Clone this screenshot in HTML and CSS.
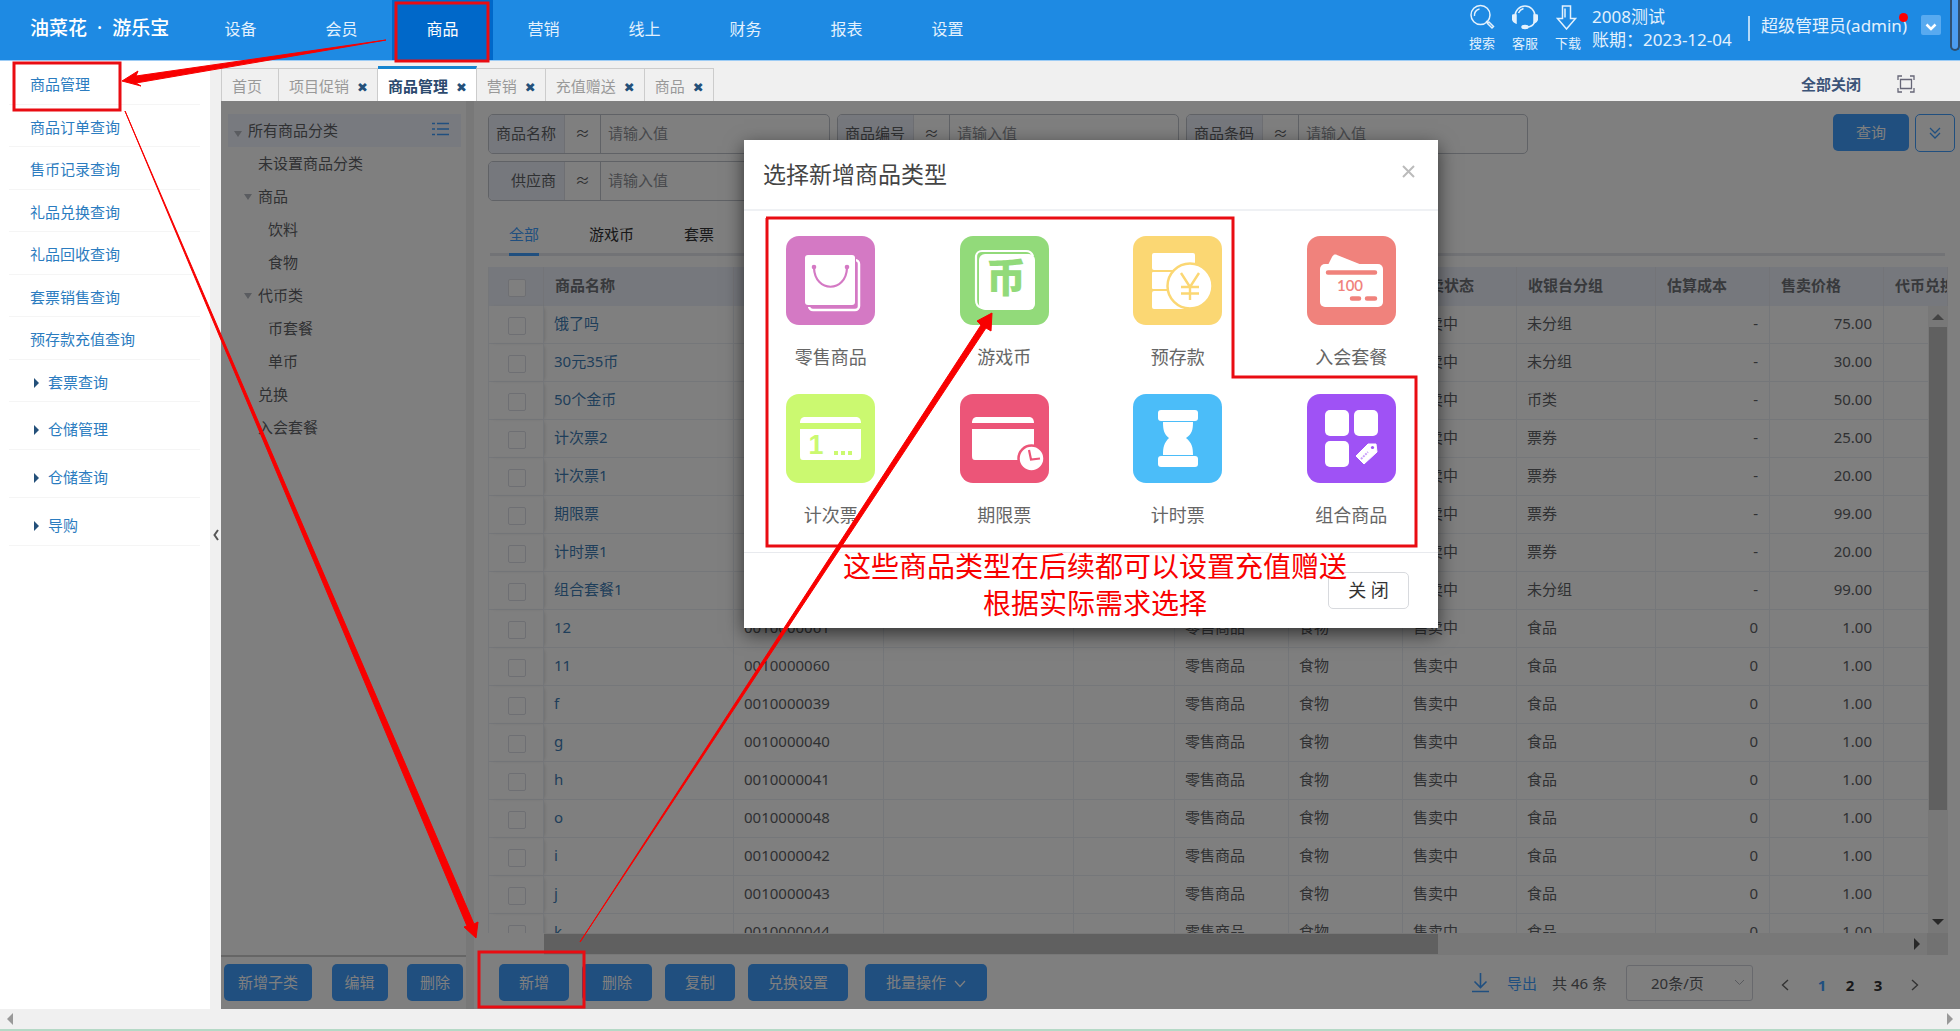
FILE: index.html
```html
<!DOCTYPE html>
<html lang="zh-CN">
<head>
<meta charset="utf-8">
<title>商品管理</title>
<link rel="stylesheet" href="styles.css">
</head>
<body>
<header class="topbar">
  <div class="logo"><span>油菜花</span><span>·</span><span>游乐宝</span></div>
  <nav class="mainnav">
    <a href="#">设备</a><a href="#">会员</a><a href="#" class="active">商品</a><a href="#">营销</a><a href="#">线上</a><a href="#">财务</a><a href="#">报表</a><a href="#">设置</a>
  </nav>
  <div class="tools">
    <a href="#"><svg width="26" height="26" viewBox="0 0 26 26"><circle cx="11.500" cy="11" r="9.500"/><path d="M5.500 12a6 6 0 0 1 5-7M17 17l2 1.500M18.500 19.500l4.500 4.500 1.500-1.500-4.500-4.500z"/></svg>搜索</a>
    <a href="#"><svg width="26" height="26" viewBox="0 0 26 26"><path d="M3 12a10 10 0 0 1 20 0M6.500 9a8 8 0 0 1 5-4.500M22.500 18c-1 3-4 5-8 5"/><path class="solid" d="M1 11h3v8c-4-1-4-6-3-8zM25 11h-3v8c4-1 4-6 3-8z"/><ellipse class="solid" cx="13" cy="23" rx="3" ry="1.500"/></svg>客服</a>
    <a href="#"><svg width="26" height="26" viewBox="0 0 26 26"><path d="M7.500 2h8v12.500h5L11.500 25l-9-10.500h5zM10 4.500v9"/></svg>下载</a>
  </div>
  <div class="account"><span>2008测试</span><span>账期：2023-12-04</span></div>
  <div class="user"><span>超级管理员(admin)</span><i class="dot"></i></div>
  <button class="drop" aria-label="展开"><svg width="12" height="8" viewBox="0 0 12 8"><path d="M1.500 1.500L6 6l4.500-4.500" fill="none" stroke="#fff" stroke-width="2.500"/></svg></button>
  <div class="edge"></div>
</header>

<div class="body">
  <aside class="side">
    <a href="#">商品管理</a><a href="#">商品订单查询</a><a href="#">售币记录查询</a><a href="#">礼品兑换查询</a><a href="#">礼品回收查询</a><a href="#">套票销售查询</a><a href="#">预存款充值查询</a><a href="#" class="sub">套票查询</a><a href="#" class="sub tall">仓储管理</a><a href="#" class="sub tall">仓储查询</a><a href="#" class="sub tall">导购</a>
  </aside>
  <button class="collapse" aria-label="收起"><svg width="6" height="12" viewBox="0 0 6 12"><path d="M5 1L1.500 6 5 11" fill="none" stroke="#555" stroke-width="2"/></svg></button>

  <div class="main">
    <div class="tabs">
      <a href="#" class="home">首页</a><a href="#">项目促销<b>✖</b></a><a href="#" class="on">商品管理<b>✖</b></a><a href="#">营销<b>✖</b></a><a href="#">充值赠送<b>✖</b></a><a href="#">商品<b>✖</b></a>
      <a href="#" class="closeall">全部关闭</a>
      <svg class="full" width="18" height="18" viewBox="0 0 18 18"><path d="M1 5V1h4M13 1h4v4M17 13v4h-4M5 17H1v-4M3.500 4.500h11v9h-11z" fill="none" stroke="#667" stroke-width="1.300"/></svg>
    </div>

    <div class="frame">
      <section class="tree">
        <ul>
          <li class="root"><i class="tri"></i>所有商品分类<svg width="17" height="14" viewBox="0 0 17 14"><path d="M0 1.500h3M5 1.500h12M0 7h3M5 7h12M0 12.500h3M5 12.500h12" stroke="#409eff" stroke-width="1.600"/></svg></li>
          <li class="l1">未设置商品分类</li>
          <li class="l1"><i class="tri"></i>商品</li>
          <li class="l2">饮料</li>
          <li class="l2">食物</li>
          <li class="l1"><i class="tri"></i>代币类</li>
          <li class="l2">币套餐</li>
          <li class="l2">单币</li>
          <li class="l1">兑换</li>
          <li class="l1">入会套餐</li>
        </ul>
        <div class="treefoot"><button class="btn">新增子类</button><button class="btn">编辑</button><button class="btn">删除</button></div>
      </section>
      <div class="split"></div>

      <section class="panel">
        <div class="search">
          <div class="fields">
            <div class="field"><label for="f1">商品名称</label><span>≈</span><input id="f1" placeholder="请输入值"></div>
            <div class="field"><label for="f2">商品编号</label><span>≈</span><input id="f2" placeholder="请输入值"></div>
            <div class="field"><label for="f3">商品条码</label><span>≈</span><input id="f3" placeholder="请输入值"></div>
            <div class="field"><label for="f4">供应商</label><span>≈</span><input id="f4" placeholder="请输入值"></div>
          </div>
          <button class="btn query">查询</button>
          <button class="more" aria-label="更多条件"><svg width="12" height="12" viewBox="0 0 12 12"><path d="M1 1l5 5 5-5M1 6l5 5 5-5" fill="none" stroke="#409eff" stroke-width="1.300"/></svg></button>
        </div>
        <div class="types"><a href="#" class="on">全部</a><a href="#">游戏币</a><a href="#">套票</a></div>

        <div class="grid">
          <div class="gridbody">
            <table>
              <colgroup><col class="c0"><col class="c1"><col class="c2"><col class="c3"><col class="c4"><col class="c5"><col class="c6"><col class="c6"><col class="c8"><col class="c9"><col class="c9"><col></colgroup>
              <thead><tr><th><input type="checkbox" aria-label="全选"></th><th>商品名称</th><th></th><th></th><th></th><th></th><th></th><th>售卖状态</th><th>收银台分组</th><th>估算成本</th><th>售卖价格</th><th>代币兑换</th></tr></thead>
              <tbody>
                <tr><td><input type="checkbox" aria-label="选择"></td><td><a href="#">饿了吗</a></td><td></td><td></td><td></td><td></td><td></td><td>售卖中</td><td>未分组</td><td>-</td><td>75.00</td><td></td></tr>
                <tr><td><input type="checkbox" aria-label="选择"></td><td><a href="#">30元35币</a></td><td></td><td></td><td></td><td></td><td></td><td>售卖中</td><td>未分组</td><td>-</td><td>30.00</td><td></td></tr>
                <tr><td><input type="checkbox" aria-label="选择"></td><td><a href="#">50个金币</a></td><td></td><td></td><td></td><td></td><td></td><td>售卖中</td><td>币类</td><td>-</td><td>50.00</td><td></td></tr>
                <tr><td><input type="checkbox" aria-label="选择"></td><td><a href="#">计次票2</a></td><td></td><td></td><td></td><td></td><td></td><td>售卖中</td><td>票券</td><td>-</td><td>25.00</td><td></td></tr>
                <tr><td><input type="checkbox" aria-label="选择"></td><td><a href="#">计次票1</a></td><td></td><td></td><td></td><td></td><td></td><td>售卖中</td><td>票券</td><td>-</td><td>20.00</td><td></td></tr>
                <tr><td><input type="checkbox" aria-label="选择"></td><td><a href="#">期限票</a></td><td></td><td></td><td></td><td></td><td></td><td>售卖中</td><td>票券</td><td>-</td><td>99.00</td><td></td></tr>
                <tr><td><input type="checkbox" aria-label="选择"></td><td><a href="#">计时票1</a></td><td></td><td></td><td></td><td></td><td></td><td>售卖中</td><td>票券</td><td>-</td><td>20.00</td><td></td></tr>
                <tr><td><input type="checkbox" aria-label="选择"></td><td><a href="#">组合套餐1</a></td><td></td><td></td><td></td><td></td><td></td><td>售卖中</td><td>未分组</td><td>-</td><td>99.00</td><td></td></tr>
                <tr><td><input type="checkbox" aria-label="选择"></td><td><a href="#">12</a></td><td>0010000061</td><td></td><td></td><td>零售商品</td><td>食物</td><td>售卖中</td><td>食品</td><td>0</td><td>1.00</td><td></td></tr>
                <tr><td><input type="checkbox" aria-label="选择"></td><td><a href="#">11</a></td><td>0010000060</td><td></td><td></td><td>零售商品</td><td>食物</td><td>售卖中</td><td>食品</td><td>0</td><td>1.00</td><td></td></tr>
                <tr><td><input type="checkbox" aria-label="选择"></td><td><a href="#">f</a></td><td>0010000039</td><td></td><td></td><td>零售商品</td><td>食物</td><td>售卖中</td><td>食品</td><td>0</td><td>1.00</td><td></td></tr>
                <tr><td><input type="checkbox" aria-label="选择"></td><td><a href="#">g</a></td><td>0010000040</td><td></td><td></td><td>零售商品</td><td>食物</td><td>售卖中</td><td>食品</td><td>0</td><td>1.00</td><td></td></tr>
                <tr><td><input type="checkbox" aria-label="选择"></td><td><a href="#">h</a></td><td>0010000041</td><td></td><td></td><td>零售商品</td><td>食物</td><td>售卖中</td><td>食品</td><td>0</td><td>1.00</td><td></td></tr>
                <tr><td><input type="checkbox" aria-label="选择"></td><td><a href="#">o</a></td><td>0010000048</td><td></td><td></td><td>零售商品</td><td>食物</td><td>售卖中</td><td>食品</td><td>0</td><td>1.00</td><td></td></tr>
                <tr><td><input type="checkbox" aria-label="选择"></td><td><a href="#">i</a></td><td>0010000042</td><td></td><td></td><td>零售商品</td><td>食物</td><td>售卖中</td><td>食品</td><td>0</td><td>1.00</td><td></td></tr>
                <tr><td><input type="checkbox" aria-label="选择"></td><td><a href="#">j</a></td><td>0010000043</td><td></td><td></td><td>零售商品</td><td>食物</td><td>售卖中</td><td>食品</td><td>0</td><td>1.00</td><td></td></tr>
                <tr><td><input type="checkbox" aria-label="选择"></td><td><a href="#">k</a></td><td>0010000044</td><td></td><td></td><td>零售商品</td><td>食物</td><td>售卖中</td><td>食品</td><td>0</td><td>1.00</td><td></td></tr>
              </tbody>
            </table>
            <div class="vbar"><i class="up"></i><div></div><i class="down"></i></div>
          </div>
          <div class="hbar"><div class="htrack"><div class="hthumb"></div><i class="right"></i></div><div class="corner"></div></div>
        </div>

        <div class="foot">
          <button class="btn w70">新增</button><button class="btn w70">删除</button><button class="btn w70">复制</button><button class="btn w100">兑换设置</button><button class="btn batch">批量操作<svg width="12" height="8" viewBox="0 0 12 8"><path d="M1 1l5 5.500L11 1" fill="none" stroke="#fff" stroke-width="1.200"/></svg></button>
          <div class="pager">
            <a href="#" class="export"><svg width="17" height="20" viewBox="0 0 17 20"><path d="M8.500 0v14M2.500 8.500l6 6 6-6M0 18.500h17" fill="none" stroke="#409eff" stroke-width="1.600"/></svg>导出</a>
            <span>共 46 条</span>
            <select aria-label="每页条数"><option>20条/页</option></select>
            <button class="pg" aria-label="上一页"><svg width="8" height="12" viewBox="0 0 8 12"><path d="M7 1L1.500 6 7 11" fill="none" stroke="#666" stroke-width="1.400"/></svg></button>
            <button class="num cur">1</button><button class="num">2</button><button class="num">3</button>
            <button class="pg" aria-label="下一页"><svg width="8" height="12" viewBox="0 0 8 12"><path d="M1 1l5.500 5L1 11" fill="none" stroke="#666" stroke-width="1.400"/></svg></button>
          </div>
        </div>
      </section>

      <div class="mask">
        <div class="modal" role="dialog" aria-labelledby="mt">
          <div class="mhead"><h2 id="mt">选择新增商品类型</h2><button aria-label="关闭"><svg width="13" height="13" viewBox="0 0 13 13"><path d="M1 1l11 11M12 1L1 12" stroke="#bbb" stroke-width="2"/></svg></button></div>
          <div class="kinds">
            <a href="#"><svg viewBox="0 0 89 89"><rect width="89" height="89" rx="13" fill="#d479c4"/><rect x="23" y="24" width="50" height="50" rx="4" fill="none" stroke="#fff" stroke-width="2.500"/><rect x="18" y="18" width="52" height="53" rx="4" fill="#d479c4"/><rect x="19" y="19" width="50" height="50" rx="3" fill="#fff"/><path d="M28 32c1 25 32 25 33 0" fill="none" stroke="#d479c4" stroke-width="2.200"/><circle cx="28" cy="31" r="2.300" fill="#d479c4"/><circle cx="61" cy="31" r="2.300" fill="#d479c4"/></svg>零售商品</a>
            <a href="#"><svg viewBox="0 0 89 89"><rect width="89" height="89" rx="13" fill="#92da7a"/><path d="M22 72c-4-1-6-4-6-8V21c0-4 3-6 6-6h44c4 0 6 2 7 5" fill="none" stroke="#fff" stroke-width="2.200"/><rect x="19" y="18" width="56" height="56" rx="6" fill="#fff"/><text x="46" y="56" text-anchor="middle" font-size="40" font-weight="900" fill="#92da7a">币</text></svg>游戏币</a>
            <a href="#"><svg viewBox="0 0 89 89"><rect width="89" height="89" rx="13" fill="#fbd773"/><rect x="19" y="17" width="43" height="17" rx="2" fill="#fff"/><rect x="19" y="36" width="38" height="17" rx="1" fill="#fff"/><rect x="19" y="55" width="40" height="18" rx="2" fill="#fff"/><circle cx="57" cy="50" r="22.500" fill="#fff" stroke="#fbd773" stroke-width="2.500"/><path d="M48 37l9 14 9-14M57 51v13M48 51h18M48 57.500h18" fill="none" stroke="#fbd773" stroke-width="2.400"/></svg>预存款</a>
            <a href="#"><svg viewBox="0 0 89 89"><rect width="89" height="89" rx="13" fill="#f0827c"/><path d="M21 29l4-8c1-2 3-3 5-2l25 10z" fill="#fff"/><rect x="13" y="28" width="63" height="43" rx="5" fill="#fff"/><path d="M21 36.500h47M45 62.500h7M60 62.500h8" stroke="#f0827c" stroke-width="4.500" stroke-linecap="round"/><text class="hundred" x="43" y="55" text-anchor="middle" font-size="15" font-weight="600" fill="#f0827c">100</text></svg>入会套餐</a>
            <a href="#"><svg viewBox="0 0 89 89"><rect width="89" height="89" rx="13" fill="#cbf970"/><path d="M14 29c0-4 2-6 5-6h51c3 0 5 2 5 6zM14 35h61v27c0 3-1 4-3 4H17c-2 0-3-1-3-4z" fill="#fff"/><text class="one" x="30" y="60" text-anchor="middle" font-size="27" font-weight="700" fill="#cbf970">1</text><path d="M48 57h4v4h-4zM55 57h4v4h-4zM62 57h4v4h-4z" fill="#cbf970"/></svg>计次票</a>
            <a href="#"><svg viewBox="0 0 89 89"><rect width="89" height="89" rx="13" fill="#ec5578"/><path d="M12 29c0-4 2-6 5-6h52c3 0 5 2 5 6zM12 35h62v27c0 3-1 4-3 4H15c-2 0-3-1-3-4z" fill="#fff"/><circle cx="71.500" cy="64.500" r="13" fill="#fff" stroke="#ec5578" stroke-width="2.500"/><path d="M69 56l2 9.500 9-1" fill="none" stroke="#ec5578" stroke-width="2.200"/></svg>期限票</a>
            <a href="#"><svg viewBox="0 0 89 89"><rect width="89" height="89" rx="13" fill="#4bbdf9"/><rect x="25" y="16" width="40" height="11" rx="3" fill="#fff"/><rect x="25" y="62" width="40" height="11" rx="3" fill="#fff"/><path d="M30 28h30c0 8-1 12-7 16 6 5 7 9 7 17H30c0-8 1-12 6-17-5-4-6-8-6-16z" fill="#fff"/></svg>计时票</a>
            <a href="#"><svg viewBox="0 0 89 89"><rect width="89" height="89" rx="13" fill="#9f52f5"/><rect x="18" y="16" width="24" height="26" rx="5" fill="#fff"/><rect x="47" y="16" width="24" height="26" rx="5" fill="#fff"/><rect x="18" y="47" width="24" height="26" rx="5" fill="#fff"/><path d="M49 62l12-12 8 0 1 8-13 12z" fill="#fff" stroke="#fff" stroke-linejoin="round"/><circle cx="65.500" cy="53.500" r="1.600" fill="#9f52f5"/><path d="M54 65l7-7" stroke="#c9a0fa" stroke-width="2" stroke-dasharray="2 1"/></svg>组合商品</a>
          </div>
          <div class="mfoot"><button>关 闭</button></div>
        </div>
      </div>
    </div>
  </div>
</div>
<div class="pagebar"><i class="left"></i><i class="right"></i></div>

<svg class="notes" width="1960" height="1031" viewBox="0 0 1960 1031">
  <g class="box"><rect x="396" y="3" width="92" height="58"/><rect x="14" y="63" width="106" height="47"/><rect x="479" y="952" width="105" height="55"/><path d="M766 218H1233V377H1416V546H767V218z"/></g>
  <g class="arrow"><path d="M386 40L136 83 141 86 122 81 138 71 136 76z"/><path d="M125 111L474 924 478 922 476 938 464 927 467 926z"/><path d="M580 942L986 328 991 331 992 313 977 321 981 325z"/></g>
  <text x="1095" y="577">这些商品类型在后续都可以设置充值赠送</text>
  <text x="1095" y="614">根据实际需求选择</text>
</svg>
</body>
</html>
```
FILE: styles.css
```css
* { box-sizing: border-box; }
html, body { height: 100%; margin: 0; }
body {
  display: flex; flex-direction: column; overflow: hidden; position: relative;
  font: 15px/20px "Noto Sans", "Noto Sans CJK SC", sans-serif; color: #606266; background: #f0f0f0;
}
a { color: inherit; text-decoration: none; }
button, input, select { font: inherit; color: inherit; margin: 0; padding: 0; border: 0; background: none; }
ul { list-style: none; margin: 0; padding: 0; }

/* top bar */
.topbar { flex: none; height: 61px; display: flex; background: #1e8ae3; border-bottom: 1px solid #9dccf5; color: #e3f1fd; position: relative; }
.logo { width: 190px; padding: 18px 0 0 30px; font-size: 19px; font-weight: 500; color: #fff; white-space: nowrap; display: flex; gap: 10px; }
.mainnav { display: flex; flex: 1; font-size: 16px; }
.mainnav a { width: 101px; text-align: center; padding-top: 19px; }
.mainnav .active { background: #0068c9; color: #fff; }
.tools { display: flex; gap: 17px; padding: 4px 11px 0 0; font-size: 13px; }
.tools a { width: 26px; line-height: 26px; }
.tools svg { display: block; fill: none; stroke: #e3f1fd; stroke-width: 1.5; }
.tools .solid { fill: #e3f1fd; }
.account { width: 156px; font-size: 17px; line-height: 23px; padding-top: 5px; display: flex; flex-direction: column; white-space: nowrap; }
.user { width: 173px; height: 25px; margin-top: 16px; padding-left: 11px; border-left: 2px solid #b4d9f8; font-size: 17px; position: relative; white-space: nowrap; }
.dot { position: absolute; left: 149px; top: -3px; width: 9px; height: 9px; border-radius: 5px; background: #f00; }
.drop { width: 20px; height: 20px; margin: 15px 9px 0 0; background: #58aaf0; border-radius: 2px; line-height: 10px; }
.edge { width: 10px; height: 51px; border: 2px solid #2f4f70; border-top: 0; border-radius: 0 0 5px 5px; background: #4b9cf0; }

.body { flex: 1; display: flex; min-height: 0; }
.side { flex: none; width: 210px; background: #fff; padding: 1px 10px 0 9px; color: #2b7cc0; }
.side a { display: block; height: 43px; padding: 12px 0 0 21px; border-bottom: 1px solid #f5f5f5; }
.side a:nth-child(even) { height: 42px; }
.side .sub { padding-left: 25px; }
.side .sub::before { content: ""; display: inline-block; border: 5px solid transparent; border-left-color: #24507a; border-right: 0; margin-right: 9px; }
.side .tall, .side .tall:nth-child(even) { height: 48px; padding-top: 17px; }
.collapse { flex: none; width: 11px; background: #f0f0f0; }
.main { flex: 1; min-width: 0; display: flex; flex-direction: column; }

/* page tabs */
.tabs { flex: none; height: 40px; display: flex; align-items: flex-end; padding-right: 45px; color: #999; }
.tabs a { height: 33px; padding: 7px 9px 0 10px; border: 1px solid #ccc; border-width: 1px 1px 0 0; white-space: nowrap; }
.tabs .home { border-left-width: 1px; width: 58px; }
.tabs b { font: 13px/16px "DejaVu Sans", sans-serif; color: #24507a; margin-left: 8px; }
.tabs .on { height: 35px; border-top: 3px solid #1585d0; background: #fff; color: #2c4a6e; font-weight: 700; }
.tabs .closeall { margin-left: auto; border: 0; padding: 6px 0 0; margin-right: 36px; color: #3c5478; font-weight: 700; }
.tabs .full { margin-bottom: 8px; }

.frame { flex: 1; min-height: 0; display: flex; position: relative; background: #fff; }
.btn { height: 37px; border-radius: 5px; background: #409eff; color: #fff; line-height: 18px; padding-bottom: 1px; }

/* category tree */
.tree { flex: none; width: 245px; display: flex; flex-direction: column; }
.tree ul { flex: 1; padding: 13px 5px 0 7px; }
.tree li { height: 33px; padding-top: 6px; }
.tree .root { padding: 6px 12px 0 6px; background: #f0f5ff; display: flex; align-items: baseline; }
.tree .root svg { margin-left: auto; }
.tree .tri { display: inline-block; border: 4px solid transparent; border-top: 6px solid #b4b8c0; border-bottom: 0; margin-right: 6px; vertical-align: 2px; }
.tree .root .tri { align-self: center; }
.tree .l1 { padding-left: 30px; }
.tree .l1 .tri { margin-left: -14px; }
.tree .l2 { padding-left: 40px; }
.treefoot { height: 54px; padding: 7px 3px 0; border-top: 2px solid #ccc; display: flex; justify-content: space-between; }
.treefoot .btn { width: 56px; }
.treefoot .btn:first-child { width: 88px; }
.split { flex: none; width: 8px; background: #f0f0f0; }

.panel { flex: 1; min-width: 0; display: flex; flex-direction: column; }
.search { display: flex; padding: 13px 5px 0 14px; gap: 6px; align-items: flex-start; }
.fields { flex: 1; display: flex; flex-wrap: wrap; gap: 7px; max-width: 1060px; }
.field { width: 342px; height: 40px; border: 1px solid #c0c4cc; border-radius: 5px; display: flex; overflow: hidden; line-height: 36px; }
.field label { width: 76px; padding-right: 8px; text-align: right; background: #edf1fa; border-right: 1px solid #dcdfe6; }
.field span { width: 36px; text-align: center; border-right: 1px solid #c0c4cc; }
.field input { flex: 1; min-width: 0; padding: 0 0 2px 7px; }
.field input::placeholder { color: #909399; }
.query { width: 76px; margin-left: auto; }
.more { width: 40px; height: 38px; border: 1px solid #409eff; border-radius: 5px; }
.types { display: flex; gap: 50px; margin: 20px 15px 0 16px; padding-left: 19px; height: 35px; border-bottom: 3px solid #e4e7ed; color: #303133; }
.types a { padding-top: 3px; }
.types .on { color: #409eff; height: 35px; border-bottom: 3px solid #409eff; }

/* data grid */
.grid { flex: 1; min-height: 0; margin: 11px 12px 0 14px; display: flex; flex-direction: column; }
.gridbody { flex: 1; min-height: 0; overflow: hidden; position: relative; }
table { table-layout: fixed; width: 100%; border-collapse: separate; border-spacing: 0; }
.c0 { width: 56px; } .c1 { width: 190px; } .c2 { width: 150px; } .c3 { width: 190px; } .c4 { width: 101px; }
.c5 { width: 114px; } .c6 { width: 114px; } .c8 { width: 139px; } .c9 { width: 114px; }
th { height: 39px; padding: 0 0 3px 11px; text-align: left; background: #edf1fa; font-weight: 700; color: #707379; white-space: nowrap; overflow: hidden; border-right: 1px solid #e6e9f0; }
td { height: 38px; padding: 0 11px 3px 10px; border-bottom: 1px solid #ebeef5; border-right: 1px solid #ebeef5; }
th:first-child, td:first-child { padding: 2px 0 0 19px; line-height: 18px; border-left: 1px solid #ebeef5; }
td:first-child { box-shadow: 2px 0 4px -2px #ccc; }
td a { color: #3f7db5; }
td:nth-child(10), td:nth-child(11) { text-align: right; }
input[type=checkbox] { appearance: none; width: 18px; height: 18px; border: 1px solid #dcdfe6; border-radius: 2px; background: #fff; vertical-align: middle; }
.vbar { position: absolute; right: 0; top: 39px; bottom: 0; width: 20px; background: #f0f0f0; display: flex; flex-direction: column; align-items: center; padding: 8px 1px; }
.vbar div { width: 18px; flex: none; height: 79%; background: #c1c1c1; margin-top: 7px; }
.vbar i, .pagebar i, .hbar i { border: 6px solid transparent; }
.vbar .up { border-bottom-color: #888; border-top: 0; }
.vbar .down { border-top-color: #505050; border-bottom: 0; margin-top: auto; }
.hbar { flex: none; height: 22px; display: flex; padding-left: 56px; }
.htrack { flex: 1; background: #f0f0f0; display: flex; align-items: center; justify-content: space-between; padding-right: 7px; }
.hthumb { width: 65%; height: 20px; background: #c1c1c1; }
.hbar .right { border-left-color: #505050; border-right: 0; }
.corner { width: 21px; background: #e4e4e4; }

.foot { flex: none; height: 54px; display: flex; padding: 9px 23px 0 25px; gap: 13px; }
.w70 { width: 70px; } .w100 { width: 100px; }
.foot .batch { width: 122px; margin-left: 4px; }
.batch svg { margin-left: 8px; }
.pager { margin-left: auto; display: flex; align-items: center; height: 37px; }
.export { color: #409eff; display: flex; align-items: center; gap: 18px; margin-right: 15px; }
.pager select { appearance: none; width: 127px; height: 36px; margin: 0 28px 0 19px; padding-left: 24px; border: 1px solid #d0d3da; border-radius: 3px;
  background: url("data:image/svg+xml,%3Csvg xmlns='http://www.w3.org/2000/svg' width='11' height='7'%3E%3Cpath d='M1 1l4.500 4.500L10 1' fill='none' stroke='%23b0b3bb'/%3E%3C/svg%3E") no-repeat right 7px top 13px; }
.pg { width: 8px; height: 24px; margin-top: 4px; line-height: 12px; }
.num { width: 28px; margin-top: 4px; font-weight: 700; color: #303133; }
.num.cur { color: #409eff; margin-left: 19px; }
.num + .pg { margin-left: 19px; margin-right: 18px; }

/* dialog */
.mask { position: absolute; inset: 0; background: rgba(0,0,0,.5); }
.modal { position: absolute; left: 523px; top: 39px; width: 694px; background: #fff; box-shadow: 0 6px 18px rgba(0,0,0,.6); }
.mhead { height: 71px; padding: 19px 23px 0 19px; border-bottom: 2px solid #eff1f4; display: flex; justify-content: space-between; align-items: flex-start; }
.mhead h2 { margin: 0; font-size: 23px; line-height: 30px; font-weight: 400; color: #444; }
.mhead button { line-height: 13px; padding-top: 6px; }
.kinds { display: grid; grid-template-columns: repeat(4, 1fr); row-gap: 25px; padding: 25px 0; }
.kinds a { display: flex; flex-direction: column; align-items: center; font-size: 18px; line-height: 24px; gap: 20px; color: #666; }
.kinds svg { width: 89px; height: 89px; }
.kinds .one { font-family: "Liberation Sans", sans-serif; }
.kinds .hundred { font-family: Lato, sans-serif; }
.mfoot { height: 76px; border-top: 1px solid #e8eaee; padding: 19px 29px 0; text-align: right; }
.mfoot button { width: 81px; height: 37px; padding-bottom: 2px; border: 1px solid #d8dade; border-radius: 5px; font-size: 18px; line-height: 30px; color: #333; background: #fff; }

.pagebar { flex: none; height: 22px; background: #f0f0f0; border-bottom: 2px solid #b5d9c6; display: flex; justify-content: space-between; align-items: center; padding: 0 7px; }
.pagebar .left { border-right-color: #999; border-left: 0; }
.pagebar .right { border-left-color: #999; border-right: 0; }

/* tutorial marks over the page */
.notes { position: absolute; left: 0; top: 0; pointer-events: none; }
.box { fill: none; stroke: #e90c12; stroke-width: 3; }
.arrow { fill: #f80000; stroke: #f80000; stroke-width: 1; }
.notes text { font-size: 28px; fill: #f80000; text-anchor: middle; }
```
